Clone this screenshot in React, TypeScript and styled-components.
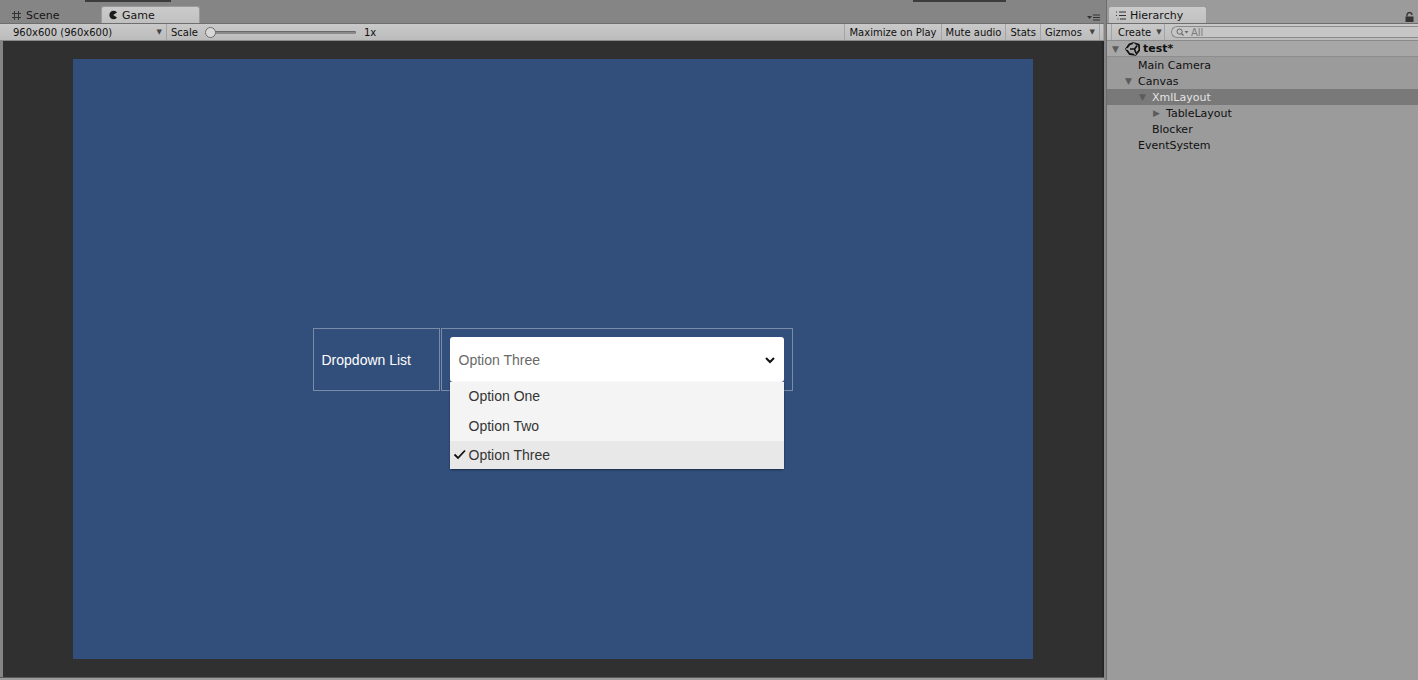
import styled, { createGlobalStyle } from "styled-components";

const GlobalStyle = createGlobalStyle`
    html, body {
        margin: 0;
        padding: 0;
        background: #858585;
    }
    body {
        font-family: "DejaVu Sans", sans-serif;
        font-size: 11px;
        color: #111;
        overflow: hidden;
    }
`;

const Window = styled.div`
    display: flex;
    width: 1418px;
    height: 680px;
    background: #858585;
`;

const Column = styled.div<{ $width: number }>`
    display: flex;
    flex-direction: column;
    width: ${(p) => p.$width}px;
    flex-shrink: 0;
`;

const TabStrip = styled.div`
    position: relative;
    display: flex;
    align-items: flex-end;
    height: 23px;
    padding-left: 4px;
    box-sizing: border-box;
`;

const TopMark = styled.div<{ $left: number; $width: number }>`
    position: absolute;
    top: 0;
    left: ${(p) => p.$left}px;
    width: ${(p) => p.$width}px;
    height: 2px;
    background: #3c3c3c;
`;

const Tab = styled.div<{ $active?: boolean; $width: number }>`
    display: flex;
    align-items: center;
    gap: 4px;
    width: ${(p) => p.$width}px;
    height: 17px;
    padding-left: 6px;
    box-sizing: border-box;
    font-size: 11px;
    color: #151515;
    border-radius: 3px 3px 0 0;
    background: ${(p) => (p.$active ? "linear-gradient(#cbcbcb, #c0c0c0)" : "transparent")};
    border: ${(p) => (p.$active ? "1px solid #9a9a9a" : "1px solid transparent")};
    border-bottom: none;
`;

const PanelMenu = styled.div`
    position: absolute;
    right: 4px;
    bottom: 2px;
    display: flex;
    align-items: center;
    gap: 1px;
`;

const Toolbar = styled.div`
    display: flex;
    align-items: stretch;
    height: 18px;
    box-sizing: border-box;
    background: linear-gradient(#c9c9c9, #bcbcbc);
    border-top: 1px solid #6e6e6e;
    border-bottom: 1px solid #8a8a8a;
    font-size: 10px;
    color: #111;
`;

const ToolItem = styled.div<{ $width?: number; $grow?: boolean }>`
    display: flex;
    align-items: center;
    gap: 6px;
    padding: 0 4px;
    ${(p) => (p.$width ? `width: ${p.$width}px;` : "")}
    ${(p) => (p.$grow ? "flex: 1;" : "")}
    box-sizing: border-box;
    border-right: 1px solid #a4a4a4;
    white-space: nowrap;
`;

const Caret = styled.span`
    margin-left: auto;
    font-size: 7px;
    color: #444;
`;

const SliderTrack = styled.div`
    position: relative;
    width: 150px;
    height: 3px;
    border-radius: 2px;
    background: #8a8a8a;
    box-shadow: inset 0 1px 0 #6a6a6a;
`;

const SliderThumb = styled.div`
    position: absolute;
    left: -1px;
    top: -4px;
    width: 9px;
    height: 9px;
    border-radius: 50%;
    background: #d8d8d8;
    border: 1px solid #6d6d6d;
`;

const GameView = styled.div`
    flex: 1;
    display: flex;
    align-items: center;
    justify-content: center;
    margin-left: 3px;
    background: #303030;
    border-right: 2px solid #262626;
`;

const Screen = styled.div`
    display: flex;
    align-items: center;
    justify-content: center;
    width: 960px;
    height: 600px;
    background: #324e7b;
    font-family: "Liberation Sans", Arial, sans-serif;
`;

const Table = styled.div`
    display: flex;
    gap: 1px;
`;

const Cell = styled.div<{ $width: number }>`
    position: relative;
    display: flex;
    align-items: center;
    width: ${(p) => p.$width}px;
    height: 63px;
    padding: 0 8px;
    box-sizing: border-box;
    border: 1px solid rgba(255, 255, 255, 0.35);
`;

const Label = styled.span`
    color: #fff;
    font-size: 14px;
    padding-top: 1px;
`;

const Select = styled.div`
    display: flex;
    align-items: center;
    justify-content: space-between;
    width: 100%;
    height: 45px;
    padding: 1px 8px 0 9px;
    box-sizing: border-box;
    background: #fff;
    border-radius: 3px;
    color: #6a6a6a;
    font-size: 14px;
`;

const Menu = styled.div`
    position: absolute;
    left: 8px;
    right: 8px;
    top: 53px;
    display: flex;
    flex-direction: column;
    background: #f4f4f4;
    border-radius: 0 0 3px 3px;
    box-shadow: 0 1px 2px rgba(0, 0, 0, 0.45);
    z-index: 2;
`;

const MenuItem = styled.div<{ $selected?: boolean; $height: number }>`
    display: flex;
    align-items: center;
    height: ${(p) => p.$height}px;
    padding-left: 3px;
    gap: 3px;
    color: #353535;
    font-size: 14px;
    background: ${(p) => (p.$selected ? "#e8e8e8" : "transparent")};
`;

const CheckSlot = styled.span`
    display: flex;
    width: 13px;
    justify-content: center;
`;

const BottomEdge = styled.div`
    height: 2px;
    background: #9c9c9c;
    border-top: 1px solid #5a5a5a;
`;

const HierarchyPanel = styled.div`
    flex: 1;
    display: flex;
    flex-direction: column;
    margin-left: 2px;
    background: #9b9b9b;
    border-left: 1px solid #6c6c6c;
`;

const CreateButton = styled.div`
    display: flex;
    align-items: center;
    gap: 5px;
    width: 54px;
    padding-left: 6px;
    box-sizing: border-box;
    margin-left: 4px;
    border-left: 1px solid #a4a4a4;
    border-right: 1px solid #a4a4a4;
`;

const Search = styled.div`
    flex: 1;
    display: flex;
    align-items: center;
    gap: 2px;
    margin: 2px 0 2px 6px;
    padding-left: 4px;
    border: 1px solid #8a8a8a;
    border-right: none;
    border-radius: 7px 0 0 7px;
    background: #c6c6c6;
    color: #7c7c7c;
    font-size: 10px;
`;

const Row = styled.div<{ $indent: number; $selected?: boolean; $header?: boolean }>`
    display: flex;
    align-items: center;
    height: 16px;
    padding-left: ${(p) => p.$indent}px;
    box-sizing: border-box;
    font-size: 11px;
    font-weight: ${(p) => (p.$header ? 700 : 400)};
    color: ${(p) => (p.$selected ? "#e4e4e4" : "#101010")};
    background: ${(p) => (p.$selected ? "#797979" : p.$header ? "#a7a7a7" : "transparent")};
    ${(p) => (p.$header ? "border-bottom: 1px solid #8d8d8d;" : "")}
`;

const Arrow = styled.span`
    display: inline-block;
    width: 13px;
    font-size: 9px;
    color: #5c5c5c;
`;

function SceneIcon() {
    return (
        <svg width="11" height="11" viewBox="0 0 11 11">
            <path d="M3.5 1v9M7.5 1v9M1 3.5h9M1 7.5h9" stroke="#333" strokeWidth="1" fill="none" />
        </svg>
    );
}

function GameIcon() {
    return (
        <svg width="10" height="10" viewBox="0 0 10 10">
            <path d="M9 2.6A4.2 4.2 0 1 0 9 7.4L5.2 5Z" fill="#1c1c1c" />
        </svg>
    );
}

function ListIcon() {
    return (
        <svg width="11" height="9" viewBox="0 0 11 9">
            <path d="M1 1h1M1 4.5h1M2.5 8h1M4 1h7M4 4.5h7M5 8h6" stroke="#333" strokeWidth="1.2" fill="none" />
        </svg>
    );
}

function MenuIcon() {
    return (
        <>
            <svg width="5" height="4" viewBox="0 0 5 4">
                <path d="M0 0h5L2.5 3Z" fill="#333" />
            </svg>
            <svg width="7" height="7" viewBox="0 0 7 7">
                <path d="M0 1h7M0 3.5h7M0 6h7" stroke="#333" strokeWidth="1" />
            </svg>
        </>
    );
}

const LockWrap = styled.span`
    position: absolute;
    right: 4px;
    bottom: 1px;
    display: flex;
`;

function LockIcon() {
    return (
        <LockWrap>
            <svg width="9" height="10" viewBox="0 0 9 10">
                <path d="M2 4.5V3a2.5 2.5 0 0 1 5 0" stroke="#333" strokeWidth="1.3" fill="none" />
                <rect x="0.5" y="4.5" width="8" height="5.5" fill="#333" />
            </svg>
        </LockWrap>
    );
}

function UnityLogo() {
    return (
        <svg width="15" height="14" viewBox="0 0 15 14">
            <path
                d="M8.5 1L13.8 2.6 14.5 8 10.5 12.8 4.6 12 1 7 4.4 2.4Z"
                fill="none"
                stroke="#111"
                strokeWidth="1.8"
                strokeLinejoin="round"
            />
            <path d="M5 7h5M9.5 7l2.7-3.6M9.5 7l1.6 4.6" stroke="#111" strokeWidth="1.6" fill="none" />
            <path d="M8.5 1L10.2 3.8M1 7h3M10.5 12.8L8.9 10.3" stroke="#a7a7a7" strokeWidth="1.4" />
        </svg>
    );
}

function Magnifier() {
    return (
        <svg width="13" height="9" viewBox="0 0 13 9">
            <circle cx="3.6" cy="3.6" r="2.6" stroke="#666" strokeWidth="1" fill="none" />
            <path d="M5.5 5.5L7.5 7.5" stroke="#666" strokeWidth="1.2" />
            <path d="M8.5 3h4L10.5 5.5Z" fill="#666" />
        </svg>
    );
}

function Chevron() {
    return (
        <svg width="12" height="8" viewBox="0 0 12 8">
            <path d="M2 2l4 4 4-4" stroke="#111" strokeWidth="2" fill="none" />
        </svg>
    );
}

function Check() {
    return (
        <svg width="13" height="11" viewBox="0 0 13 11">
            <path d="M1.5 5.5l3.5 3.5 7-7.5" stroke="#111" strokeWidth="1.8" fill="none" />
        </svg>
    );
}

type Node = { name: string; indent: number; arrow?: "open" | "closed"; selected?: boolean };

const nodes: Node[] = [
    { name: "Main Camera", indent: 31 },
    { name: "Canvas", indent: 18, arrow: "open" },
    { name: "XmlLayout", indent: 32, arrow: "open", selected: true },
    { name: "TableLayout", indent: 46, arrow: "closed" },
    { name: "Blocker", indent: 45 },
    { name: "EventSystem", indent: 31 },
];

const options = [
    { label: "Option One", height: 29 },
    { label: "Option Two", height: 30 },
    { label: "Option Three", height: 28 },
];

export default function App() {
    return (
        <Window>
            <GlobalStyle />
            <Column $width={1104}>
                <TabStrip>
                    <TopMark $left={85} $width={86} />
                    <TopMark $left={913} $width={93} />
                    <Tab $width={97}>
                        <SceneIcon />
                        Scene
                    </Tab>
                    <Tab $active $width={99}>
                        <GameIcon />
                        Game
                    </Tab>
                    <PanelMenu>
                        <MenuIcon />
                    </PanelMenu>
                </TabStrip>
                <Toolbar>
                    <ToolItem $width={167} style={{ paddingLeft: 13 }}>
                        960x600 (960x600)
                        <Caret>▼</Caret>
                    </ToolItem>
                    <ToolItem $grow style={{ borderRight: "none", gap: 8 }}>
                        Scale
                        <SliderTrack>
                            <SliderThumb />
                        </SliderTrack>
                        1x
                    </ToolItem>
                    <ToolItem style={{ borderLeft: "1px solid #a4a4a4" }}>Maximize on Play</ToolItem>
                    <ToolItem>Mute audio</ToolItem>
                    <ToolItem>Stats</ToolItem>
                    <ToolItem $width={59} style={{ gap: 2 }}>
                        Gizmos
                        <Caret>▼</Caret>
                    </ToolItem>
                    <ToolItem $width={4} style={{ padding: 0 }} />
                </Toolbar>
                <GameView>
                    <Screen>
                        <Table>
                            <Cell $width={127}>
                                <Label>Dropdown List</Label>
                            </Cell>
                            <Cell $width={352}>
                                <Select>
                                    Option Three
                                    <Chevron />
                                </Select>
                                <Menu>
                                    {options.map((o, i) => (
                                        <MenuItem key={o.label} $height={o.height} $selected={i === 2}>
                                            <CheckSlot>{i === 2 && <Check />}</CheckSlot>
                                            {o.label}
                                        </MenuItem>
                                    ))}
                                </Menu>
                            </Cell>
                        </Table>
                    </Screen>
                </GameView>
                <BottomEdge />
            </Column>
            <HierarchyPanel>
                <TabStrip style={{ paddingLeft: 1 }}>
                    <Tab $active $width={99}>
                        <ListIcon />
                        Hierarchy
                    </Tab>
                    <LockIcon />
                </TabStrip>
                <Toolbar>
                    <CreateButton>
                        Create
                        <Caret style={{ marginLeft: 0 }}>▼</Caret>
                    </CreateButton>
                    <Search>
                        <Magnifier />
                        All
                    </Search>
                </Toolbar>
                <Row $indent={5} $header>
                    <Arrow>▼</Arrow>
                    <UnityLogo />
                    <span style={{ marginLeft: 3 }}>test*</span>
                </Row>
                {nodes.map((n) => (
                    <Row key={n.name} $indent={n.indent} $selected={n.selected}>
                        {n.arrow && <Arrow>{n.arrow === "open" ? "▼" : "▶"}</Arrow>}
                        {n.name}
                    </Row>
                ))}
            </HierarchyPanel>
        </Window>
    );
}
